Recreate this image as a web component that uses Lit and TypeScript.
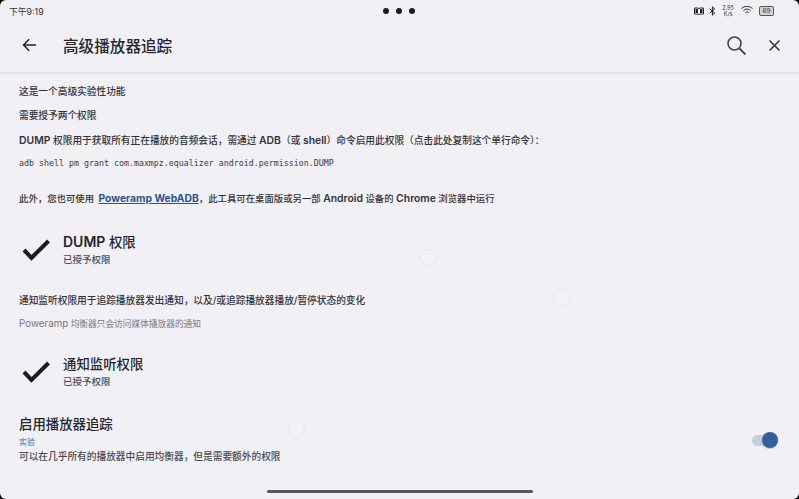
import {LitElement, html, css} from 'lit';
import {customElement} from 'lit/decorators.js';

const check = html`<svg class="check" viewBox="0 0 28 22" width="28" height="22"><path d="M2 11l7.500 7.800L26.500 2" fill="none" stroke="#1c1c20" stroke-width="4"/></svg>`;

@customElement('app-root')
export class AppRoot extends LitElement {
  static styles = css`
    :host {
      display: block;
      position: relative;
      width: 799px;
      height: 499px;
      overflow: hidden;
      background: #000;
      color: #2b2b30;
      font-family: Inter, "Noto Sans CJK SC", sans-serif;
    }
    .screen {
      height: 100%;
      border-radius: 6px;
      background: #f0f0f5;
    }
    .status {
      height: 22px;
      display: grid;
      grid-template-columns: 1fr auto 1fr;
      align-items: center;
      padding: 0 25px 0 9px;
      font-size: 8.8px;
      color: #333;
    }
    .dots { display: flex; gap: 7px; margin: 0 0 1px 14px; }
    .dots i { width: 6px; height: 6px; border-radius: 50%; background: #1c1c20; }
    .sys { display: flex; justify-content: flex-end; align-items: center; gap: 5px; }
    .speed { font-size: 5.5px; line-height: 6px; text-align: center; width: 14px; }
    .batt {
      width: 13px; height: 8px; border: 1px solid #555; border-radius: 2px;
      font-size: 6.5px; line-height: 8px; text-align: center; background: #d4d4d8;
    }
    .bar {
      height: 46px;
      display: flex;
      align-items: center;
      padding: 0 19px 4px 22px;
      border-bottom: 1px solid #dcdce0;
      box-shadow: 0 1px 1px #e6e6ea;
    }
    .bar h1 {
      flex: 1;
      margin: 0 0 0 27px;
      font-size: 15.6px;
      font-weight: 500;
      color: #26262a;
    }
    .bar .gap { margin-right: 23px; }
    .content { padding: 11px 19px 0; }
    p {
      margin: 0;
      font-size: 9.7px;
      line-height: 16px;
      font-weight: 500;
      color: #33333a;
    }
    b { font-size: 10.4px; font-weight: 600; }
    .l1 { margin-bottom: 8px; }
    .l2 { margin-bottom: 9px; }
    .mono {
      font-family: "DejaVu Sans Mono", monospace;
      font-weight: 400;
      font-size: 8.3px;
      margin-top: 6px;
      color: #3c3c42;
    }
    .after { margin-top: 19px; font-size: 9.4px; }
    a { margin-left: 2px; color: #2c5590; font-size: 10.3px; font-weight: 700; text-decoration: underline; }
    .perm { display: flex; align-items: center; gap: 13px; margin: 25px 0 0 3px; }
    .perm .t { font-size: 13.4px; line-height: 19px; font-weight: 500; color: #26262a; }
    .perm .t b { font-size: 14px; }
    .perm .s { font-size: 9.5px; line-height: 15px; font-weight: 500; color: #4c4c52; }
    .dim { color: #77777e; font-size: 8.7px; font-weight: 400; margin-top: 7px; }
    .dim span { font-size: 9.8px; }
    .notify { margin-top: 26px; }
    .second { margin-top: 23px; }
    .toggle-row { display: flex; align-items: center; justify-content: space-between; margin: 26px 3px 0 0; }
    .toggle-row .t { font-size: 13.4px; line-height: 19px; font-weight: 500; color: #26262a; }
    .tag { font-size: 8px; line-height: 11px; margin-top: 3px; color: #3f6aa5; }
    .desc { font-size: 9.7px; line-height: 16px; margin-top: 1px; font-weight: 500; color: #4a4a50; }
    .switch { position: relative; width: 25px; height: 11px; border-radius: 6px; background: #c3cde0; }
    .switch::after {
      content: '';
      position: absolute;
      right: -1px;
      top: -3px;
      width: 16px;
      height: 16px;
      border-radius: 50%;
      background: #33609c;
      box-shadow: 0 1px 1px #0003;
    }
    .touch {
      position: absolute;
      width: 15px;
      height: 15px;
      border-radius: 50%;
      border: 1.5px solid #e6e6f0;
      background: #f3f3f6;
    }
    .home {
      position: absolute;
      left: 267px;
      bottom: 6px;
      width: 266px;
      height: 3px;
      border-radius: 2px;
      background: #55555a;
    }
  `;

  render() {
    return html`
      <div class="screen">
        <div class="status">
          <span>下午9:19</span>
          <div class="dots"><i></i><i></i><i></i></div>
          <div class="sys">
            <svg width="10" height="8" viewBox="0 0 10 8"><path d="M.5 1h3.500l1 .7 1-.7h3.500v6H6l-1 .7L4 7H.5z" fill="#fff" stroke="#222"/><path d="M1.500 2H4v4H1.500zM6 2h2.500v4H6z" fill="#222"/></svg>
            <svg width="7" height="10" viewBox="0 0 7 10"><path d="M.7 2.800l5 4.200-2.300 2.200V.800L5.700 3 .7 7.200" fill="none" stroke="#222"/></svg>
            <div class="speed">2.95<br />K/s</div>
            <svg style="margin:0 1px" width="12" height="10" viewBox="0 0 12 10"><path d="M.5 2.500a8 8 0 0 1 11 0M2.500 4.500a5 5 0 0 1 7 0M4.300 6.500a2.500 2.500 0 0 1 3.400 0M5.800 8.700h.4" fill="none" stroke="#333"/></svg>
            <div class="batt">69</div>
          </div>
        </div>
        <header class="bar">
          <svg width="14" height="14" viewBox="0 0 14 14"><path d="M14 7H1.500M7.200 1.200L1.500 7l5.700 5.800" fill="none" stroke="#222" stroke-width="1.500"/></svg>
          <h1>高级播放器追踪</h1>
          <svg class="gap" width="19" height="19" viewBox="0 0 19 19"><circle cx="7.500" cy="7.500" r="6.500" fill="none" stroke="#444" stroke-width="1.600"/><path d="M12.500 12.500l6 6" stroke="#444" stroke-width="1.800"/></svg>
          <svg width="11" height="11" viewBox="0 0 11 11"><path d="M.5.5l10 10M10.500.5l-10 10" stroke="#333" stroke-width="1.500"/></svg>
        </header>
        <main class="content">
          <p class="l1">这是一个高级实验性功能</p>
          <p class="l2">需要授予两个权限</p>
          <p><b>DUMP</b> 权限用于获取所有正在播放的音频会话，需通过 <b>ADB</b>（或 <b>shell</b>）命令启用此权限（点击此处复制这个单行命令）：</p>
          <p class="mono">adb shell pm grant com.maxmpz.equalizer android.permission.DUMP</p>
          <p class="after">此外，您也可使用 <a>Poweramp WebADB</a>，此工具可在桌面版或另一部 <b>Android</b> 设备的 <b>Chrome</b> 浏览器中运行</p>
          <div class="perm">
            ${check}
            <div><div class="t"><b>DUMP</b> 权限</div><div class="s">已授予权限</div></div>
          </div>
          <p class="notify">通知监听权限用于追踪播放器发出通知，以及/或追踪播放器播放/暂停状态的变化</p>
          <p class="dim"><span>Poweramp</span> 均衡器只会访问媒体播放器的通知</p>
          <div class="perm second">
            ${check}
            <div><div class="t">通知监听权限</div><div class="s">已授予权限</div></div>
          </div>
          <div class="toggle-row">
            <div>
              <div class="t">启用播放器追踪</div>
              <div class="tag">实验</div>
              <div class="desc">可以在几乎所有的播放器中启用均衡器，但是需要额外的权限</div>
            </div>
            <div class="switch"></div>
          </div>
        </main>
      </div>
      <span class="touch" style="left:420px;top:249px"></span>
      <span class="touch" style="left:553px;top:290px"></span>
      <span class="touch" style="left:288px;top:421px"></span>
      <div class="home"></div>
    `;
  }
}
